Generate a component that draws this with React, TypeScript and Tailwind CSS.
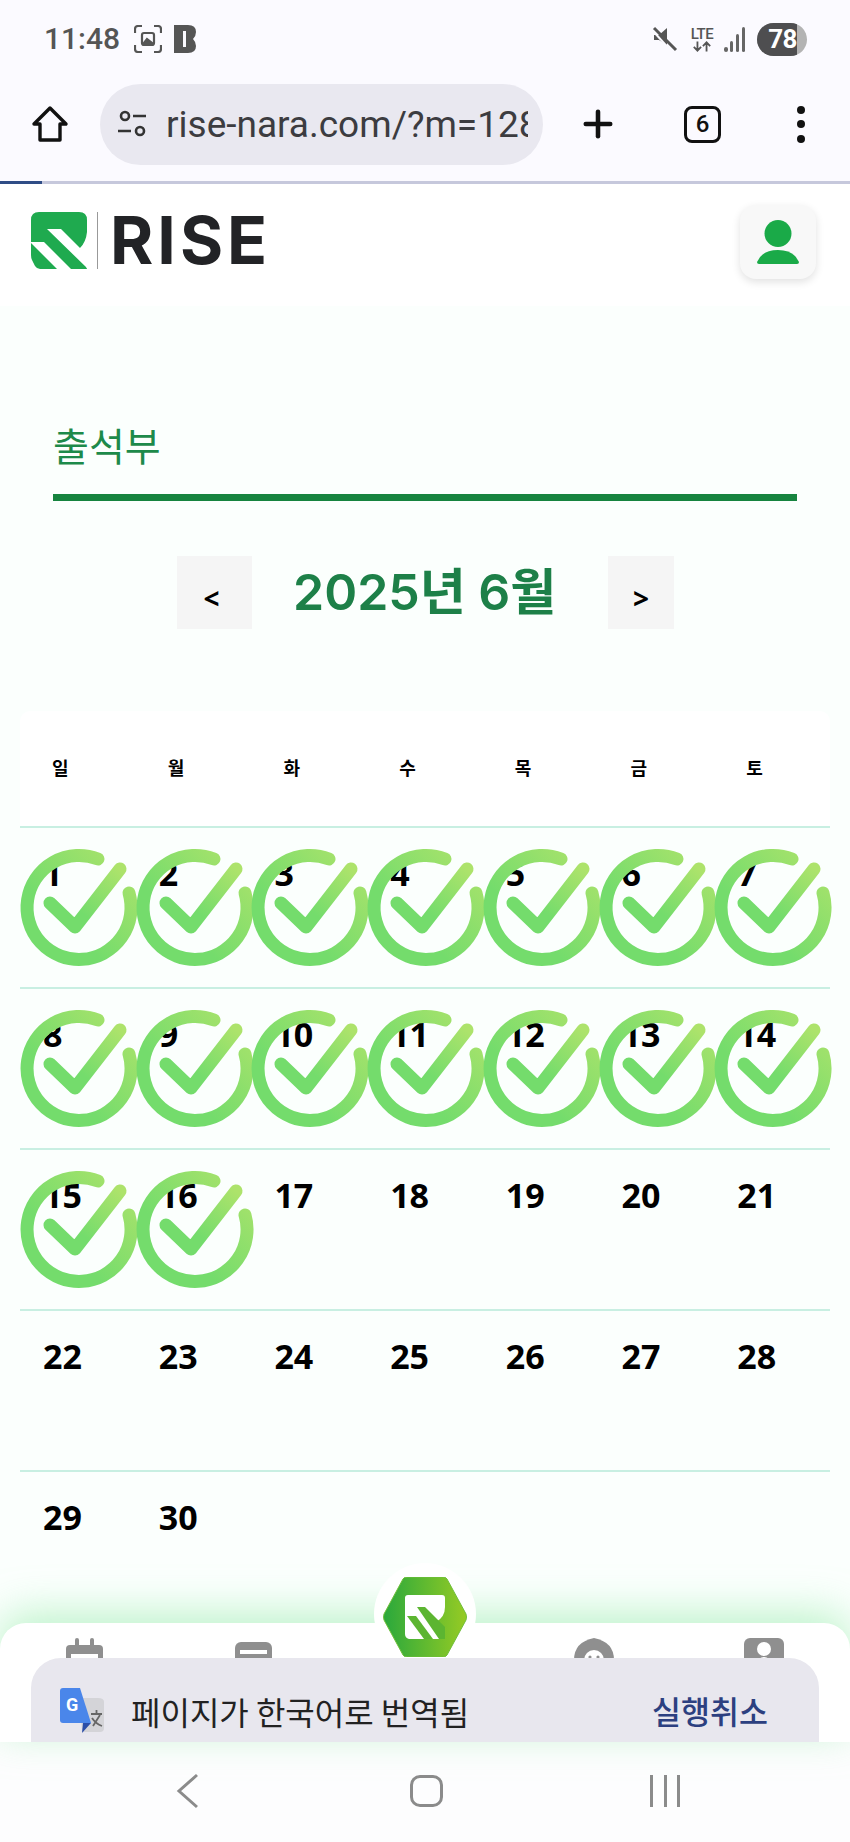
import { Plus } from 'lucide-react';

const SANS = "font-['Roboto','Noto_Sans_CJK_KR',sans-serif]";

const Check = () => (
  <svg viewBox="0 0 116 116" className="absolute left-0 top-[21px] size-[116px] overflow-visible" fill="none">
    <defs>
      <linearGradient id="chk" x1="0" y1="1" x2="1" y2="0">
        <stop offset="0.35" stopColor="#74dc6c" />
        <stop offset="1" stopColor="#ade36b" />
      </linearGradient>
    </defs>
    <path d="M78 10 A52 52 0 1 0 109 44" stroke="url(#chk)" strokeWidth="13" strokeLinecap="round" />
    <path d="M30 54 L55 78 L100 20" stroke="url(#chk)" strokeWidth="13" strokeLinecap="round" strokeLinejoin="round" />
  </svg>
);

const DayCell = ({ day, checked }: { day?: number; checked?: boolean }) => (
  <div className="relative h-full pl-[23px] pt-[22px]">
    {day && <span className="block font-['Open_Sans',sans-serif] text-[34px] font-bold leading-[46px] text-black">{day}</span>}
    {checked && <Check />}
  </div>
);

const LogoMark = () => (
  <svg viewBox="0 0 56 57" className="h-[57px] w-[56px]">
    <path d="M8 0H48Q56 0 56 8V20Q55 30 49 36L56 57H9Q6 57 4 54L1 48Q0 46 0 43V8Q0 0 8 0Z" fill="#1faa4f" />
    <polygon points="16,17 30,17 49,36 58,36 58,58 57,57" fill="#fff" />
    <polygon points="-1,30 13,30 40,57 26,57" fill="#fff" />
  </svg>
);

const StatusBar = () => (
  <div className="flex h-[70px] items-center justify-between pl-[44px] pr-[43px] pt-[8px]">
    <div className="flex items-center">
      <span className={`${SANS} text-[30px] font-medium leading-none text-[#555]`}>11:48</span>
      <svg viewBox="0 0 28 28" className="ml-[14px] size-[28px]" fill="none" stroke="#555" strokeWidth="2.2">
        <path d="M1 8V4Q1 1 4 1H8M20 1H24Q27 1 27 4V8M27 20V24Q27 27 24 27H20M8 27H4Q1 27 1 24V20" />
        <rect x="8" y="8" width="12" height="12" rx="2" />
        <path d="M10 18L13 14L18 18Z" fill="#555" />
      </svg>
      <svg viewBox="0 0 22 28" className="ml-[12px] h-[28px] w-[22px]">
        <path d="M0 0H14Q22 0 22 7Q22 11 19 14Q22 17 22 21Q22 28 14 28H0Z" fill="#555" />
        <rect x="9" y="6" width="3" height="16" fill="#fbfaff" />
      </svg>
    </div>
    <div className="flex items-center">
      <svg viewBox="0 0 26 26" className="size-[26px]" fill="#555">
        <path d="M2 9H7L15 2V19L7 14H2Z" />
        <path d="M2 2L24 24" stroke="#555" strokeWidth="3" />
        <path d="M1 5L20 26" stroke="#fbfaff" strokeWidth="2" />
      </svg>
      <div className="ml-[11px] flex w-[26px] flex-col items-center">
        <span className={`${SANS} text-[15px] font-medium leading-[14px] tracking-[-0.5px] text-[#555]`}>LTE</span>
        <svg viewBox="0 0 22 11" className="h-[11px] w-[20px]" fill="none" stroke="#555" strokeWidth="2">
          <path d="M6 0V10M2 6L6 10L10 6M16 11V1M12 5L16 1L20 5" />
        </svg>
      </div>
      <svg viewBox="0 0 22 26" className="ml-[9px] h-[26px] w-[22px]" fill="#666">
        <rect x="0" y="21" width="4" height="5" rx="2" />
        <rect x="6" y="15" width="3" height="11" rx="1.5" />
        <rect x="12" y="8" width="3" height="18" rx="1.5" />
        <rect x="18" y="1" width="3" height="25" rx="1.5" />
      </svg>
      <div className="relative ml-[11px] flex h-[33px] w-[50px] items-center overflow-hidden rounded-full bg-[#b3b3b3]">
        <div className="flex h-full w-[40px] items-center justify-end bg-[#4e4e50]">
          <span className={`${SANS} text-[26px] font-bold leading-none tracking-[-0.5px] text-white`}>78</span>
        </div>
      </div>
    </div>
  </div>
);

const Toolbar = () => (
  <div className="flex h-[111px] items-center pb-[3px]">
    <svg viewBox="0 0 38 38" className="ml-[31px] size-[38px]" fill="none" stroke="#111" strokeWidth="3.4" strokeLinejoin="round">
      <path d="M19 3L35 19H29V35H9V19H3Z" />
    </svg>
    <div className="ml-[31px] flex h-[81px] w-[443px] items-center rounded-full bg-[#e9e8f0] pl-[17px] pr-[15px]">
      <svg viewBox="0 0 30 30" className="size-[30px] shrink-0" fill="none" stroke="#333" strokeWidth="2.6">
        <circle cx="8" cy="7" r="4" />
        <path d="M16 7H29M1 22H14" />
        <circle cx="23" cy="22" r="4" />
      </svg>
      <div className="ml-[19px] min-w-0 flex-1 overflow-hidden">
        <span className={`${SANS} block whitespace-nowrap text-[37px] leading-none text-[#3c3c40]`}>rise-nara.com/?m=128</span>
      </div>
    </div>
    <Plus className="ml-[34px] size-[42px] text-[#111]" strokeWidth={2.6} />
    <div className="ml-[65px] flex size-[37px] items-center justify-center rounded-[8px] border-[3.5px] border-[#111]">
      <span className={`${SANS} text-[24px] font-medium leading-none text-[#111]`}>6</span>
    </div>
    <div className="ml-[76px] flex h-[37px] flex-col justify-between">
      <span className="size-[8px] rounded-full bg-[#111]" />
      <span className="size-[8px] rounded-full bg-[#111]" />
      <span className="size-[8px] rounded-full bg-[#111]" />
    </div>
  </div>
);

const NavStub = ({ kind }: { kind: 'cal' | 'clip' | 'face' | 'user' }) => (
  <svg viewBox="0 0 40 40" className="h-[40px] w-[40px]" fill="#8f8f8f">
    {kind === 'cal' && (
      <>
        <rect x="1" y="7" width="37" height="33" rx="4" />
        <rect x="10" y="0" width="4" height="12" rx="2" />
        <rect x="25" y="0" width="4" height="12" rx="2" />
        <rect x="6" y="16" width="27" height="4" fill="#fff" />
      </>
    )}
    {kind === 'clip' && (
      <>
        <rect x="1" y="4" width="37" height="36" rx="6" />
        <rect x="6" y="12" width="27" height="4" fill="#fff" />
      </>
    )}
    {kind === 'face' && (
      <>
        <path d="M20 0Q40 4 40 22V40H0V22Q0 4 20 0Z" />
        <circle cx="20" cy="22" r="10" fill="#fff" />
        <circle cx="16" cy="19" r="1.6" />
        <circle cx="24" cy="19" r="1.6" />
      </>
    )}
    {kind === 'user' && (
      <>
        <rect x="0" y="0" width="40" height="40" rx="6" />
        <circle cx="20" cy="11" r="7" fill="#fff" />
        <path d="M10 26Q20 12 30 26V40H10Z" fill="#fff" />
      </>
    )}
  </svg>
);

const BottomArea = () => (
  <div className="absolute inset-x-0 bottom-0 h-[219px]">
    <div className="relative h-[119px] rounded-t-[26px] bg-white shadow-[0_-10px_40px_rgba(150,235,170,0.6)]">
      <div className="flex pl-[65px] pt-[15px]">
        <NavStub kind="cal" />
        <div className="ml-[129px]"><NavStub kind="clip" /></div>
        <div className="ml-[300px]"><NavStub kind="face" /></div>
        <div className="ml-[130px]"><NavStub kind="user" /></div>
      </div>
    </div>
    <div className="absolute left-[374px] top-[-60px] flex size-[102px] items-start justify-center rounded-full bg-white pt-[14px]">
      <svg viewBox="0 0 84 80" className="h-[80px] w-[84px]">
        <defs>
          <linearGradient id="hex" x1="0" y1="0" x2="1" y2="0">
            <stop offset="0" stopColor="#2aa83c" />
            <stop offset="1" stopColor="#96cb24" />
          </linearGradient>
        </defs>
        <path d="M20 2Q21 0 24 0H60Q63 0 64 2L83 37Q84 40 83 43L64 78Q63 80 60 80H24Q21 80 20 78L1 43Q0 40 1 37Z" fill="url(#hex)" stroke="#6fbf3a" strokeWidth="1" />
        <path d="M25 18Q22 18 22 21V57Q22 61 26 62H62L53 45Q62 40 62 30V21Q62 18 59 18Z" fill="#fff" />
        <polygon points="34,30 42,30 62,50 62,62 56,62" fill="#5cb531" />
        <polygon points="24,39 33,39 50,62 41,62" fill="#5cb531" />
      </svg>
    </div>
    <div className="absolute inset-x-[31px] top-[35px] flex h-[84px] items-center rounded-t-[30px] bg-[#e8e7ee] pl-[29px] pr-[51px] pt-[22px]">
      <svg viewBox="0 0 46 46" className="size-[46px] shrink-0">
        <path d="M20 10H38Q44 10 44 14V40Q44 44 40 44H22Z" fill="#d4d4d8" />
        <path d="M31 26H42M36.5 22V26M33 38L40 27M32 30Q36 36 42 38" stroke="#666" strokeWidth="1.8" fill="none" />
        <path d="M3 0H20L31 35H3Q0 35 0 32V3Q0 0 3 0Z" fill="#4a86ea" />
        <path d="M23 35H31L22 45Z" fill="#2b4ea8" />
        <text x="6" y="23" fontSize="18" fontWeight="700" fill="#fff" fontFamily="Roboto, sans-serif">G</text>
      </svg>
      <span className="ml-[25px] font-['Noto_Sans_CJK_KR',sans-serif] text-[32px] leading-none text-[#222]">페이지가 한국어로 번역됨</span>
      <span className="ml-auto font-['Noto_Sans_CJK_KR',sans-serif] text-[31.5px] font-medium leading-none text-[#2c4080]">실행취소</span>
    </div>
    <div className="flex h-[100px] items-center bg-[#fdfdfe] pb-[2px]">
      <svg viewBox="0 0 24 36" className="ml-[176px] h-[36px] w-[24px]" fill="none" stroke="#8b8b8b" strokeWidth="3">
        <path d="M21 2L3 18L21 34" />
      </svg>
      <div className="ml-[210px] h-[32px] w-[33px] rounded-[10px] border-[3px] border-[#8b8b8b]" />
      <div className="ml-[207px] flex h-[32px] w-[30px] justify-between">
        <span className="h-full w-[3px] bg-[#8b8b8b]" />
        <span className="h-full w-[3px] bg-[#8b8b8b]" />
        <span className="h-full w-[3px] bg-[#8b8b8b]" />
      </div>
    </div>
  </div>
);

const WEEK = ['일', '월', '화', '수', '목', '금', '토'];
const DAYS = Array.from({ length: 30 }, (_, i) => i + 1);

export default function App() {
  const rows = [0, 1, 2, 3, 4].map((r) => DAYS.slice(r * 7, r * 7 + 7));

  return (
    <div className="relative h-[1842px] w-[850px] overflow-hidden bg-[#fbfffd]">
      <div className="bg-[#fbfaff]">
        <StatusBar />
        <Toolbar />
        <div className="h-[3px] bg-[#c6c8dc]">
          <div className="h-full w-[42px] bg-[#2f4d86]" />
        </div>
      </div>

      <div className="flex h-[122px] items-center justify-between bg-white pb-[5px] pl-[31px] pr-[34px]">
        <div className="flex items-center pb-[5px]">
          <LogoMark />
          <span className="ml-[10px] h-[57px] w-px bg-[#999]" />
          <span className="ml-[12px] font-['Inter',sans-serif] text-[66px] font-bold leading-none tracking-[4px] text-[#222326]">RISE</span>
        </div>
        <div className="mb-[2px] flex h-[74px] w-[76px] flex-col items-center justify-center rounded-[16px] bg-[#f8f8f8] shadow-[0_3px_8px_rgba(0,0,0,0.12)]">
          <svg viewBox="0 0 42 44" className="h-[44px] w-[42px]" fill="#1aaa48">
            <circle cx="21" cy="13.5" r="13.5" />
            <path d="M0 42Q5 30 21 30Q37 30 42 42Q42 44 40 44H2Q0 44 0 42Z" />
          </svg>
        </div>
      </div>

      <div className="px-[53px] pt-[112px]">
        <h1 className="font-['Noto_Sans_CJK_KR',sans-serif] text-[39px] font-normal leading-[52px] text-[#1d8a4a]">출석부</h1>
        <div className="mt-[24px] h-[7px] bg-[#16843f]" />
      </div>

      <div className="mt-[54px] flex h-[74px] items-center pl-[177px]">
        <div className="flex h-[73px] w-[75px] items-end justify-center bg-[#f5f5f5] pb-[17px] pr-[6px]">
          <span className="font-['Open_Sans',sans-serif] text-[28px] font-bold leading-none text-black">&lt;</span>
        </div>
        <h2 className="ml-[41px] w-[274px] whitespace-nowrap font-['Inter','Noto_Sans_CJK_KR',sans-serif] text-[50px] font-semibold leading-none text-[#1d8048]">2025년 6월</h2>
        <div className="ml-[41px] flex h-[73px] w-[66px] items-end justify-center bg-[#f5f5f5] pb-[17px]">
          <span className="font-['Open_Sans',sans-serif] text-[28px] font-bold leading-none text-black">&gt;</span>
        </div>
      </div>

      <div className="ml-[20px] mt-[82px] w-[810px]">
        <div className="grid h-[115px] grid-cols-7 items-center rounded-t-[10px] bg-white pb-[4px]">
          {WEEK.map((w) => (
            <span key={w} className="pl-[32px] font-['Noto_Sans_CJK_KR',sans-serif] text-[18px] font-bold leading-none text-black">{w}</span>
          ))}
        </div>
        {rows.map((row, i) => (
          <div key={i} className="grid h-[161px] grid-cols-7 border-t-2 border-[#c8efe2]">
            {row.map((d) => (
              <DayCell key={d} day={d} checked={d <= 16} />
            ))}
          </div>
        ))}
      </div>

      <BottomArea />
    </div>
  );
}
